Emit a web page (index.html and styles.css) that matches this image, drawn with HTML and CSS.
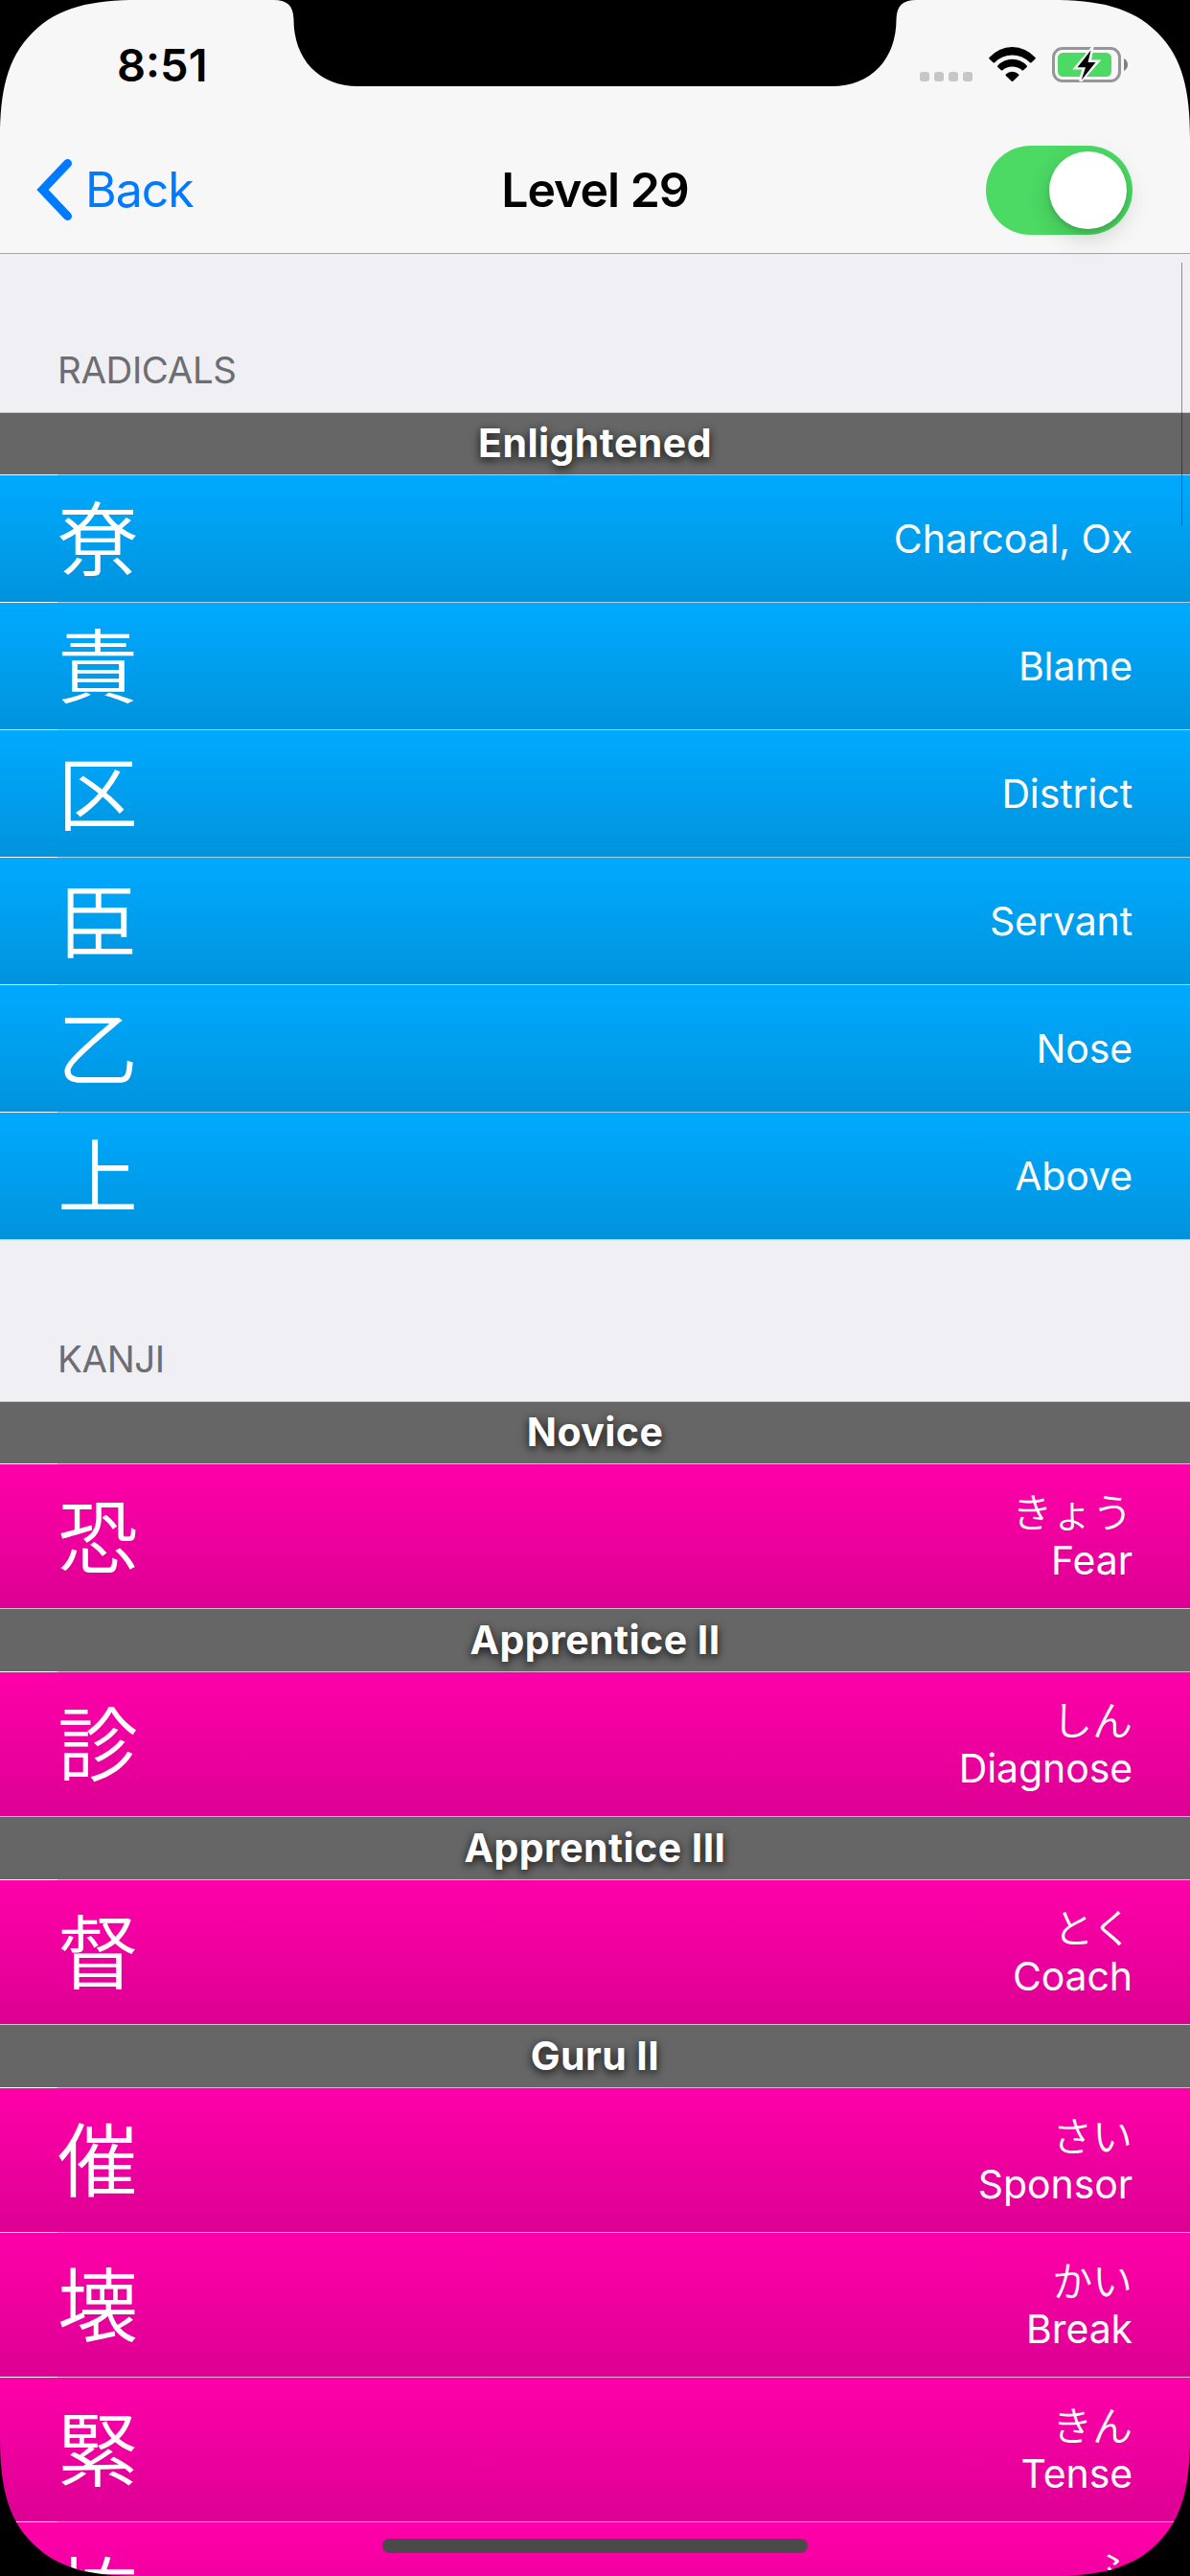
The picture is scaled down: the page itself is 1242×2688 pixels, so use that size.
FILE: index.html
```html
<!DOCTYPE html>
<html lang="en">
<head>
<meta charset="utf-8">
<title>Level 29</title>
<link rel="stylesheet" href="styles.css">
</head>
<body>
<div class="screen">
  <header class="top">
    <div class="status">
      <span class="clock">8:51</span>
      <div class="indicators">
        <div class="signal"><i></i><i></i><i></i><i></i></div>
        <svg class="wifi" width="49" height="37" viewBox="0 0 49 37">
          <path d="M.5 11A31.7 31.7 0 0 1 48.5 11q.6.7 0 1.4L44.5 16.2q-.8.7-1.6 0A25.6 25.6 0 0 0 6.1 16.2q-.8.7-1.6 0L.5 12.4q-.6-.7 0-1.4z"/>
          <path d="M9.3 19.5A20.5 20.5 0 0 1 39.7 19.5q.7.7 0 1.4L36.1 24.3q-.7.6-1.5 0A15.5 15.5 0 0 0 14.4 24.3q-.8.6-1.5 0L9.3 20.9q-.7-.7 0-1.4z"/>
          <path d="M17.8 28.6A9.5 9.5 0 0 1 31.2 28.6q.6.7 0 1.4L25.2 35.7q-.7.6-1.4 0L17.8 30q-.6-.7 0-1.4z"/>
        </svg>
        <svg class="battery" width="80" height="39" viewBox="0 0 80 39">
          <rect x="1.5" y="2.5" width="69" height="34" rx="9.5" fill="none" stroke="#969698" stroke-width="3"/>
          <rect x="6" y="7" width="56" height="25" rx="5.5" fill="#4cd964"/>
          <path d="M75 13q4 2.200 4 6.500t-4 6.500z" fill="#808083"/>
          <path d="M41.500 3L25 22.800h8.500L29.500 36.500 47.500 16.300h-8.500z" fill="#f7f7f8" stroke="#f7f7f8" stroke-width="3.500"/>
          <path d="M40.500 4.500L26.500 22.200h8.500L30.700 35.500 45.500 17h-8z"/>
        </svg>
      </div>
    </div>
    <nav class="nav">
      <a class="back">
        <svg width="40" height="66" viewBox="0 0 40 66"><path d="M32.500 5.500L6.500 33 32.500 60.500" fill="none" stroke="#007aff" stroke-width="9" stroke-linecap="round"/></svg>
        <span>Back</span>
      </a>
      <h1>Level 29</h1>
      <div class="switch"><i></i></div>
    </nav>
  </header>
  <main>
    <h2>RADICALS</h2>
    <section class="radicals">
      <h3 class="first">Enlightened</h3>
      <div class="row"><b lang="ja">尞</b><p>Charcoal, Ox</p></div>
      <div class="row"><b lang="ja">責</b><p>Blame</p></div>
      <div class="row"><b lang="ja">区</b><p>District</p></div>
      <div class="row"><b lang="ja">臣</b><p>Servant</p></div>
      <div class="row"><b lang="ja">乙</b><p>Nose</p></div>
      <div class="row"><b lang="ja">上</b><p>Above</p></div>
    </section>
    <h2 class="after">KANJI</h2>
    <section class="kanji">
      <h3 class="first">Novice</h3>
      <div class="row"><b lang="ja">恐</b><p><span lang="ja">きょう</span>Fear</p></div>
      <h3>Apprentice II</h3>
      <div class="row"><b lang="ja">診</b><p><span lang="ja">しん</span>Diagnose</p></div>
      <h3>Apprentice III</h3>
      <div class="row"><b lang="ja">督</b><p><span lang="ja">とく</span>Coach</p></div>
      <h3>Guru II</h3>
      <div class="row"><b lang="ja">催</b><p><span lang="ja">さい</span>Sponsor</p></div>
      <div class="row"><b lang="ja">壊</b><p><span lang="ja">かい</span>Break</p></div>
      <div class="row"><b lang="ja">緊</b><p><span lang="ja">きん</span>Tense</p></div>
      <div class="row"><b lang="ja">怖</b><p><span lang="ja">ふ</span></p></div>
    </section>
  </main>
  <div class="scrollbar"></div>
  <div class="home"></div>
  <svg class="bezel" width="1242" height="2688" viewBox="0 0 1242 2688">
    <defs><path id="corner" d="M0 0V145C0 96 7 61 34 34S96 0 145 0z"/></defs>
    <use href="#corner"/>
    <use href="#corner" transform="translate(1242 0) scale(-1 1)"/>
    <use href="#corner" transform="translate(0 2688) scale(1 -1)"/>
    <use href="#corner" transform="translate(1242 2688) scale(-1 -1)"/>
    <path d="M286 0C300 0 306 6 306.500 20C306.500 62 333 90 374 90H868C909 90 935.500 62 935.500 20C936 6 942 0 956 0z"/>
  </svg>
</div>
</body>
</html>
```
FILE: styles.css
```css
* { box-sizing: border-box; margin: 0; padding: 0; }

body { background: #000; font-family: Inter, "Noto Sans CJK JP", sans-serif; }

.screen {
  position: relative;
  width: 1242px;
  height: 2688px;
  overflow: hidden;
  background: #efeff4;
}

.top { height: 265px; background: #f7f7f8; border-bottom: 1px solid #a7a7ab; }

.status {
  display: flex;
  justify-content: space-between;
  height: 132px;
  padding: 48px 64px 0 122px;
}
.clock { font-size: 47px; line-height: 40px; font-weight: 600; letter-spacing: 0; }
.indicators { display: flex; align-items: flex-start; }
.signal { display: flex; gap: 5px; margin: 27px 17px 0 0; }
.signal i { width: 10px; height: 10px; border-radius: 3px; background: #c6c6c8; }
.wifi { margin: 1px 17px 0 0; }

.nav {
  display: grid;
  grid-template-columns: 1fr auto 1fr;
  align-items: center;
  height: 132px;
  padding: 0 60px;
}
.back {
  display: flex;
  align-items: center;
  gap: 11px;
  margin-left: -22px;
  color: #007aff;
  font-size: 50px;
  letter-spacing: -1px;
}
.nav h1 { font-size: 50px; font-weight: 600; letter-spacing: -1px; }
.switch {
  justify-self: end;
  width: 153px;
  height: 93px;
  padding: 6px;
  border-radius: 47px;
  background: #4cd964;
}
.switch i {
  display: block;
  width: 81px;
  height: 81px;
  margin-left: auto;
  border-radius: 50%;
  background: #fff;
  box-shadow: 0 9px 24px rgba(0, 0, 0, .17), 0 3px 5px rgba(0, 0, 0, .12);
}

h2 {
  height: 165px;
  padding: 97px 60px 0;
  font-size: 38.500px;
  line-height: 48px;
  font-weight: 400;
  color: #6d6d72;
  letter-spacing: -.4px;
}
h2.after { height: 169px; padding-top: 100px; border-top: 1px solid #b9d5e8; }

h3 {
  height: 66px;
  border-top: 1px solid #c8c7cc;
  background: #666;
  color: #fff;
  font-size: 41px;
  line-height: 64px;
  font-weight: 700;
  letter-spacing: .45px;
  text-align: center;
  text-shadow: 0 3px 10px rgba(0, 0, 0, .85);
}
h3.first { height: 65px; line-height: 62px; }

/* hairline on top of each row: solid under the inset, translucent beyond it */
.row {
  display: flex;
  align-items: center;
  justify-content: space-between;
  padding: 1px 60px 0;
  color: #fff;
}
.radicals .row {
  height: 133px;
  background:
    linear-gradient(90deg, #fff 60px, #b4cfe0 60px) top / 100% 1px no-repeat,
    linear-gradient(#0af, #0093dd);
}
.kanji .row {
  height: 151px;
  background:
    linear-gradient(90deg, #fff 60px, #e5b4d8 60px) top / 100% 1px no-repeat,
    linear-gradient(#f0a, #dd0093);
}
.row b {
  margin-top: -8px;
  font-family: "Noto Sans CJK JP", sans-serif;
  font-size: 84px;
  line-height: 120px;
  font-weight: 350;
}
.row p { font-size: 41px; line-height: 50px; letter-spacing: -.1px; text-align: right; }
.kanji p { height: 100px; }
.row span {
  display: block;
  height: 50px;
  font-family: "Noto Sans CJK JP", sans-serif;
  font-size: 42px;
  line-height: 46px;
  font-weight: 350;
}

.scrollbar { position: absolute; left: 1233px; top: 274px; width: 1px; height: 275px; background: rgba(0, 0, 0, .4); }
.home { position: absolute; left: 399px; top: 2649px; width: 444px; height: 15px; border-radius: 8px; background: #4a4a4a; }
.bezel { position: absolute; left: 0; top: 0; }
```
